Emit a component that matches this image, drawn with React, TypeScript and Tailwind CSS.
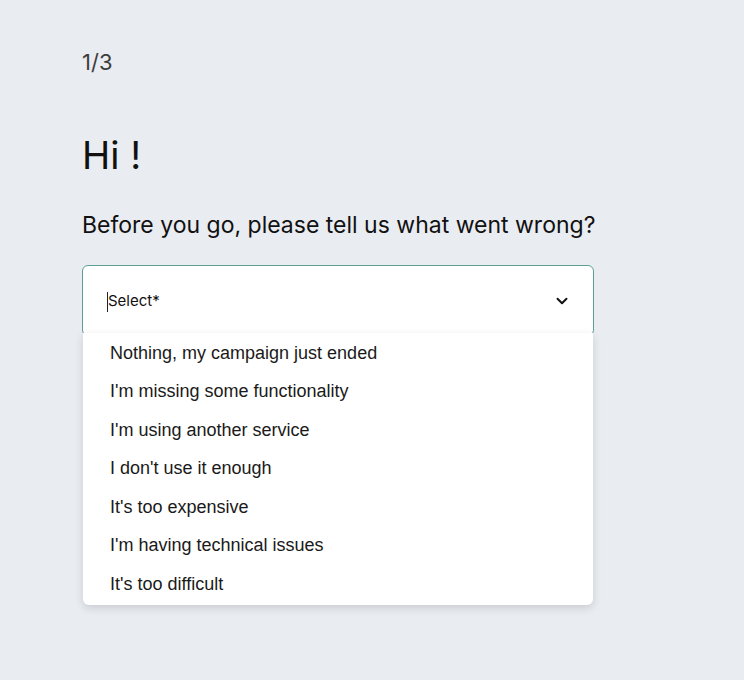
import { ChevronDown } from "lucide-react"

const reasons = [
  "Nothing, my campaign just ended",
  "I'm missing some functionality",
  "I'm using another service",
  "I don't use it enough",
  "It's too expensive",
  "I'm having technical issues",
  "It's too difficult",
]

export default function App() {
  return (
    <div className="min-h-[680px] w-full bg-[#e9ecf1] font-['Inter',sans-serif]">
      <div className="flex w-[512px] flex-col pl-[82px] pt-[48px] box-content">
        <span className="text-[22px] leading-[28px] text-[#3d3d3d]">1/3</span>

        <h1 className="mt-[55px] text-[38px] leading-[48px] text-[#111]">Hi !</h1>

        <p className="mt-[31px] whitespace-nowrap text-[23px] leading-[30px] text-[#111]">
          Before you go, please tell us what went wrong?
        </p>

        <div className="relative mt-[25px]">
          <div className="flex h-[71px] items-center justify-between rounded-md border border-[#5c9f94] bg-white pl-[24px] pr-[22px]">
            <div className="flex items-center pt-[2px]">
              <span className="h-[20px] w-px bg-[#222]" />
              <span className="text-[15px] text-[#111]">Select*</span>
            </div>
            <ChevronDown className="size-[18px] text-[#111]" strokeWidth={2.6} />
          </div>

          <ul className="absolute top-[68px] right-px left-px rounded-b-md bg-white py-px shadow-[0_3px_8px_rgba(0,0,0,0.14)] font-['Liberation_Sans',Arial,sans-serif]">
            {reasons.map(reason => (
              <li
                key={reason}
                className="flex h-[38.5px] items-center pl-[27px] text-[18px] text-[#1a1a1a]"
              >
                {reason}
              </li>
            ))}
          </ul>
        </div>
      </div>
    </div>
  )
}
